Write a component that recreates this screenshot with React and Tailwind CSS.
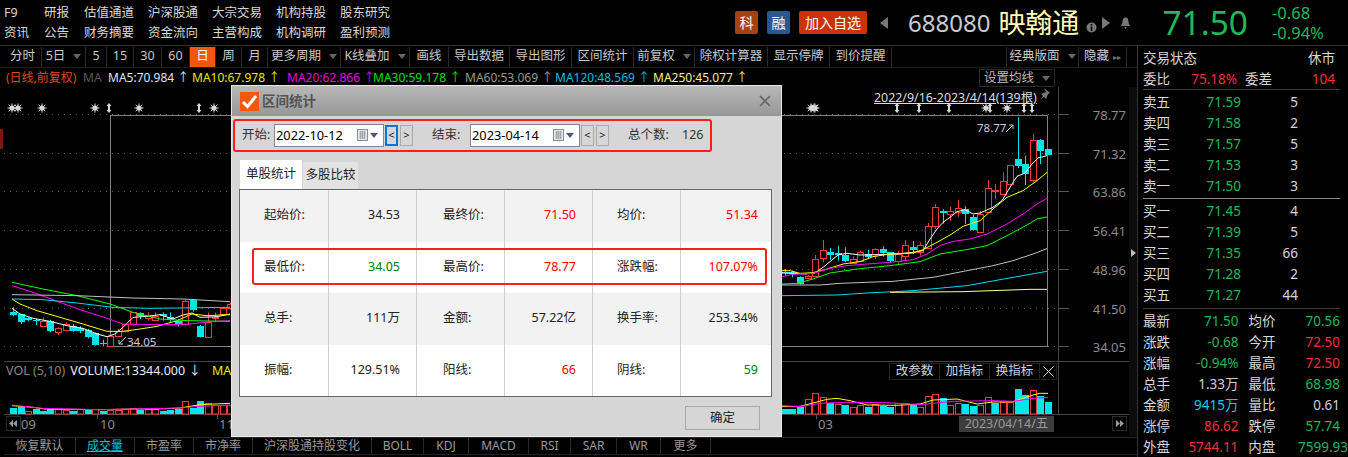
import React from "react";

const C = "#00e5e5", R = "#f03c3c";
// [zx, bodyTop, bodyBot, wickTop, wickBot, up]
const rightC = [[15,548,552,540,560,0],[37,550,556,545,565,0],[61,565,585,562,587,0],[83,562,567,558,570,1],[106,511,560,498,560,1],[128,484,508,453,520,1],[151,490,497,477,513,0],[173,492,498,470,515,0],[196,497,516,475,520,0],[218,511,522,502,525,1],[241,490,516,485,518,1],[263,496,503,482,510,0],[286,481,495,478,510,1],[308,481,492,472,503,0],[331,490,516,490,522,0],[353,495,516,485,525,1],[376,468,500,453,516,1],[398,474,483,456,495,0],[421,468,490,460,500,1],[443,411,478,402,480,1],[466,355,412,345,420,1],[488,366,371,360,404,0],[511,367,376,353,395,1],[533,358,370,333,383,1],[556,361,374,352,405,0],[578,384,423,378,425,0],[601,374,428,366,430,1],[623,298,368,273,370,1],[646,303,307,285,330,1],[668,277,316,250,320,1],[691,229,284,229,284,1],[713,210,232,85,237,0],[736,226,255,200,288,0],[758,154,272,135,282,1],[781,153,185,150,225,0],[803,180,197,180,197,0]];
const leftC = [[38,128,137,115,142,0],[62,135,160,135,165,0],[85,147,152,145,158,0],[107,152,157,150,168,0],[128,157,170,145,172,1],[151,155,185,152,190,0],[173,178,188,175,198,1],[197,165,184,160,186,1],[218,170,185,165,188,0],[241,178,187,172,192,0],[263,182,204,180,208,0],[286,193,227,190,230,0],[308,222,225,212,232,0],[331,200,230,198,232,1],[353,185,200,180,205,1],[376,165,187,165,190,1],[398,130,165,130,170,1],[421,132,140,130,150,0],[443,142,148,130,155,1],[466,140,152,130,155,1],[488,135,142,130,155,0],[511,145,153,130,160,0],[533,155,166,150,172,0],[556,97,165,90,170,1],[578,92,124,90,128,0],[601,172,203,168,205,0],[623,160,205,130,205,1],[646,143,148,130,160,1],[668,118,135,115,140,1],[691,105,118,100,122,1]];
const rightL = [
  ["#ffffff",[[5,552],[40,553],[75,555],[106,552],[130,535],[150,518],[175,498],[200,493],[240,498],[300,497],[350,495],[400,490],[430,485],[450,450],[470,420],[490,400],[510,385],[530,368],[555,362],[580,375],[600,372],[640,355],[665,335],[680,310],[695,285],[712,262],[735,252],[755,225],[775,207],[800,200]]],
  ["#ffff00",[[5,545],[30,545],[60,553],[100,551],[140,540],[190,525],[240,518],[280,503],[330,495],[400,492],[430,482],[470,460],[510,438],[550,412],[600,395],[640,360],[680,325],[730,305],[770,275],[800,250]]],
  ["#ff00ff",[[5,563],[40,556],[100,553],[150,538],[200,530],[260,525],[330,520],[400,512],[440,495],[480,470],[520,457],[570,450],[620,435],[680,405],[730,375],[770,345],[800,328]]],
  ["#00ff00",[[5,585],[50,583],[100,570],[150,552],[230,540],[330,530],[420,518],[480,495],[570,480],[620,470],[680,440],[740,408],[770,390],[800,384]]],
  ["#c0c0c0",[[5,588],[120,588],[180,583],[340,577],[460,565],[560,545],[640,530],[700,515],[760,495],[800,479]]],
  ["#00d8f0",[[5,620],[170,618],[260,612],[400,605],[560,590],[700,565],[800,547]]],
  ["#ffff90",[[330,610],[550,608],[750,601],[800,601]]],
];
const leftL = [
  ["#ffffff",[[36,118],[60,135],[100,148],[150,157],[200,170],[250,178],[290,195],[320,203],[345,195],[370,175],[400,145],[440,142],[480,137],[520,150],[550,138],[575,132],[600,145],[650,143],[690,135]]],
  ["#ffff00",[[36,90],[60,105],[110,125],[180,145],[250,165],[320,187],[370,187],[420,180],[470,172],[530,155],[575,135],[620,140],[660,138],[690,137]]],
  ["#ff00ff",[[36,50],[100,70],[180,100],[250,125],[320,148],[370,165],[420,166],[500,167],[570,165],[640,157],[690,155]]],
  ["#00ff00",[[36,40],[130,60],[230,80],[330,105],[400,130],[480,150],[560,155],[690,157]]],
  ["#c0c0c0",[[36,77],[230,80],[400,87],[550,90],[690,98]]],
  ["#00d8f0",[[36,90],[130,92],[230,102],[340,115],[450,118],[690,115]]],
];
const rightV = [[15,330,0],[37,330,0],[61,323,0],[83,300,1],[106,282,1],[128,295,1],[151,313,0],[173,316,1],[196,318,0],[218,325,1],[241,318,1],[263,323,0],[286,316,1],[308,320,0],[331,323,0],[353,313,1],[376,313,1],[398,317,0],[421,324,1],[443,292,1],[466,286,1],[488,297,0],[511,319,1],[533,313,1],[556,316,0],[578,321,0],[601,318,1],[623,295,1],[646,312,0],[668,308,1],[691,308,1],[713,270,0],[736,288,0],[758,274,1],[781,291,0],[803,309,0]];
const leftV = [[38,417,0],[62,415,0],[85,427,1],[107,420,0],[128,425,0],[151,417,0],[173,421,1],[197,423,1],[218,425,0],[241,421,1],[263,423,0],[286,421,1],[308,425,0],[331,423,1],[353,423,1],[376,421,1],[398,417,1],[421,423,0],[443,420,1],[466,421,1],[488,426,0],[511,423,0],[533,420,0],[556,397,1],[578,417,0],[601,397,0],[623,401,1],[646,408,1],[668,408,1],[691,408,1]];
const rightVL = [["#ffff00",[[5,323],[60,322],[100,312],[140,301],[170,298],[210,305],[260,318],[350,319],[420,315],[460,303],[530,300],[590,315],[640,309],[700,308],[760,288],[780,283],[803,283]]],["#ff00ff",[[5,320],[60,323],[120,313],[200,310],[320,311],[420,317],[520,307],[640,305],[700,307],[760,298],[803,295]]]];
const leftVL = [["#ffff00",[[36,410],[100,415],[135,420],[300,422],[400,420],[470,420],[540,417],[600,407],[690,403]]],["#ff00ff",[[36,408],[130,418],[300,422],[540,417],[600,412],[690,408]]]];

const rightX = z => Math.round(780 + z / 3);
const leftX = z => Math.round(z / 3);

function Candle({ c, toX, oy }) {
  const [zx, t, b, wt, wb, up] = c;
  const x = toX(zx);
  const col = up ? R : C;
  const top = Math.round(oy + t / 3), bot = Math.round(oy + b / 3);
  const h = Math.max(1, bot - top);
  return (
    <g>
      <line x1={x + 0.5} x2={x + 0.5} y1={oy + wt / 3} y2={oy + wb / 3} stroke={col} />
      {up ? <rect x={x - 2.5} y={top + 0.5} width={6} height={h} fill="#000" stroke={col} /> : <rect x={x - 3} y={top} width={7} height={h} fill={col} />}
    </g>
  );
}
function Lines({ data, toX, oy }) {
  return data.map(([col, pts], i) => (
    <polyline key={i} points={pts.map(([x, y]) => `${toX(x)},${oy + y / 3}`).join(" ")} fill="none" stroke={col} strokeWidth="1" />
  ));
}
function Vols({ data, toX, oy, base }) {
  return data.map(([zx, t, up], i) => {
    const x = toX(zx), top = Math.round(oy + t / 3), bot = Math.round(oy + base / 3);
    return up
      ? <rect key={i} x={x - 2.5} y={top + 0.5} width={6} height={bot - top - 0.5} fill="none" stroke={R} />
      : <rect key={i} x={x - 3} y={top} width={7} height={bot - top} fill={C} />;
  });
}
const Star = ({ x, y = 109 }) => (
  <g stroke="#d8d8d8" strokeWidth="1">
    <circle cx={x} cy={y} r="2.6" fill="#d8d8d8" stroke="none" />
    <line x1={x - 4.5} x2={x + 4.5} y1={y} y2={y} />
    <line x1={x} x2={x} y1={y - 4.5} y2={y + 4.5} />
    <line x1={x - 3.3} x2={x + 3.3} y1={y - 3.3} y2={y + 3.3} />
    <line x1={x - 3.3} x2={x + 3.3} y1={y + 3.3} y2={y - 3.3} />
  </g>
);
const UpDown = ({ x, y = 109 }) => (
  <path d={`M${x} ${y - 5} L${x + 2.5} ${y - 2} L${x + 1} ${y - 2} L${x + 1} ${y + 2} L${x + 2.5} ${y + 2} L${x} ${y + 5} L${x - 2.5} ${y + 2} L${x - 1} ${y + 2} L${x - 1} ${y - 2} L${x - 2.5} ${y - 2} Z`} fill="#d8d8d8" />
);

const axis = [["78.77",115],["71.32",154],["63.86",192],["56.41",231],["48.96",270],["41.50",309],["34.05",347]];

function Chart() {
  return (
    <svg className="absolute left-0 top-0 w-[1137px] h-[349px]" viewBox="0 88 1137 349">
      <rect x="0" y="130" width="3" height="20" fill="#7a1a08" />
      {axis.map(([t, y]) => (
        <g key={t}>
          <line x1="4" x2="1058" y1={y + 0.5} y2={y + 0.5} stroke="#555" strokeDasharray="1 5" />
          <line x1="1058" x2="1069" y1={y + 0.5} y2={y + 0.5} stroke="#555" />
          <text x="1126" y={y + 5.5} textAnchor="end" fontSize="13" fill="#8c8c8c">{t}</text>
        </g>
      ))}
      <rect x="110.5" y="116.5" width="937" height="231" fill="none" stroke="#808080" />
      <rect x="1129" y="88" width="8" height="349" fill="#0c0c0c" />
      <path d="M1131 250 L1136 254 L1131 258 Z" fill="#bbb" />
      <line x1="1058.5" x2="1058.5" y1="88" y2="415" stroke="#444" />
      <line x1="4" x2="1129" y1="362.5" y2="362.5" stroke="#444" />
      <line x1="4" x2="1129" y1="415.5" y2="415.5" stroke="#444" />
      {[12, 18, 42, 95, 139, 214, 811, 815, 1007].map(x => <Star key={x} x={x} />)}
      {[109, 199, 897, 919, 949, 990, 1024, 1032].map(x => <UpDown key={x} x={x} />)}
      <Star x={986} /><Star x={814} />
      {leftC.map((c, i) => <Candle key={i} c={c} toX={leftX} oy={270} />)}
      {rightC.map((c, i) => <Candle key={i} c={c} toX={rightX} oy={90} />)}
      <Lines data={leftL} toX={leftX} oy={270} />
      <Lines data={rightL} toX={rightX} oy={90} />
      <Vols data={leftV} toX={leftX} oy={270} base={435} />
      <Vols data={rightV} toX={rightX} oy={300} base={345} />
      <Lines data={leftVL} toX={leftX} oy={270} />
      <Lines data={rightVL} toX={rightX} oy={300} />
      <text x="977" y="133" fontSize="11.5" fill="#ccd">78.77</text>
      <path d="M1006 133 L1013 126 M1009 126 L1013 126 L1013 130" fill="none" stroke="#ccc" />
      <path d="M119 345 L126 338 M119 341 L119 345 L123 345" fill="none" stroke="#ccc" />
      <text x="127" y="347" fontSize="11.5" fill="#ccd">34.05</text>
      <g fill="#8c8c8c" fontSize="13">
        <line x1="97.5" x2="97.5" y1="415" y2="420" stroke="#555" />
        <text x="100" y="430">10</text>
        <line x1="217.5" x2="217.5" y1="415" y2="420" stroke="#555" />
        <text x="219" y="430">11</text>
        <text x="21" y="430">09</text>
        <line x1="816.5" x2="816.5" y1="415" y2="420" stroke="#555" />
        <text x="818" y="430">03</text>
      </g>
      <rect x="6.5" y="417.5" width="14" height="14" fill="#000" stroke="#2a2a2a" />
      <path d="M13 421 L9 424.5 L13 428 Z M17 421 L13 424.5 L17 428 Z" fill="#999" />
      <rect x="1112.5" y="417.5" width="14" height="14" fill="#000" stroke="#2a2a2a" />
      <path d="M1116 421 L1120 424.5 L1116 428 Z M1120 421 L1124 424.5 L1120 428 Z" fill="#999" />
      <path d="M1044 89 l6 5 -2 1 -2 5 -2 -2 -4 3 3 -4 -2 -2 5 -2 z" fill="#777" />
    </svg>
  );
}

const tools = [["分时",38],["5日",44,1],["5",21],["15",27],["30",28],["60",28],["日",26,0,1],["周",26],["月",26],["更多周期",73,1],["K线叠加",69,1],["画线",39],["导出数据",61],["导出图形",62],["区间统计",62],["前复权",61,1],["除权计算器",73],["显示停牌",62],["到价提醒",62]];
const Caret = () => <span className="ml-2 w-0 h-0 border-x-[4px] border-x-transparent border-t-[5px] border-t-[#666]" />;
const Tool = ({ t, w, caret, active }) => (
  <div style={{ width: w }} className={`h-[20px] flex items-center justify-center border-r border-[#2a2a2a] text-[12.5px] ${active ? "bg-[#f1570e] text-white" : "text-[#c8c8c8]"}`}>
    {t}{caret ? <Caret /> : null}
  </div>
);

const ma = [
  ["(日线,前复权)","text-[#dc4c1a] w-[77px]"],["MA","text-[#5a5a5a] w-[25px]"],["MA5:70.984 ↑","text-[#dde6f0] w-[84px]"],["MA10:67.978 ↑","text-[#e8e800] w-[95px]"],["MA20:62.866 ↑","text-[#e000e0] w-[86px]"],["MA30:59.178 ↑","text-[#00e000] w-[92px]"],["MA60:53.069 ↑","text-[#9a9a88] w-[90px]"],["MA120:48.569 ↑","text-[#00bfe0] w-[98px]"],["MA250:45.077 ↑","text-[#f2f28c]"],
];

const bottom = [["恢复默认",72,"text-[#9a9a9a]"],["成交量",59,"text-[#00c0d8] underline"],["市盈率",59,"text-[#9a9a9a]"],["市净率",59,"text-[#9a9a9a]"],["沪深股通持股变化",119,"text-[#9a9a9a]"],["BOLL",52,"text-[#9a9a9a]"],["KDJ",45,"text-[#9a9a9a]"],["MACD",60,"text-[#9a9a9a]"],["RSI",42,"text-[#9a9a9a]"],["SAR",46,"text-[#9a9a9a]"],["WR",44,"text-[#9a9a9a]"],["更多",50,"text-[#9a9a9a]"]];

const G = "text-[#1fb85a]", Rd = "text-[#ee2f3a]", W = "text-[#c8d2dc]";
const orders = [[["卖五","71.59","5"],["卖四","71.58","2"],["卖三","71.57","5"],["卖二","71.53","3"],["卖一","71.50","3"]],[["买一","71.45","4"],["买二","71.39","5"],["买三","71.35","66"],["买四","71.28","2"],["买五","71.27","44"]]];
const stats = [["最新","71.50",G,"均价","70.56",G],["涨跌","-0.68",G,"今开","72.50",Rd],["涨幅","-0.94%",G,"最高","72.50",Rd],["总手","1.33万",W,"最低","68.98",G],["金额","9415万","text-[#00d0e8]","量比","0.61",W],["涨停","86.62",Rd,"跌停","57.74",G],["外盘","5744.11",Rd,"内盘","7599.93",G]];

function Side() {
  return (
    <div className="w-[210px] h-[411px] shrink-0 border-l border-[#333] text-[13.5px] leading-[17px] text-[#d8d8d8] pl-[5px] overflow-hidden">
      <div className="h-[22px] mt-[1px] flex justify-between items-center pr-[12px]"><span>交易状态</span><span>休市</span></div>
      <div className="h-[20px] flex items-center pr-[12px]">
        <span className="w-[47px]">委比</span><span className={`${Rd} w-[47px] text-right mr-[8px]`}>75.18%</span><span>委差</span><span className={`${Rd} ml-auto`}>104</span>
      </div>
      <div className="border-t border-[#3c3c3c] mr-[7px]" />
      {orders.map((grp, gi) => (
        <div key={gi} className={gi ? "border-t border-[#888] mr-[7px] pt-[2px] pb-[2px]" : "pt-[2px] pb-[1px]"}>
          {grp.map(([a, b, c]) => (
            <div key={a} className="h-[21px] flex items-center">
              <span className="w-[60px]">{a}</span><span className={`${G} w-[38px] text-right`}>{b}</span><span className="w-[57px] text-right text-[#d0d8e0]">{c}</span>
            </div>
          ))}
        </div>
      ))}
      <div className="border-t border-[#3c3c3c] mr-[7px] pt-[2px]">
        {stats.map(([a, b, bc, c, d, dc]) => (
          <div key={a} className="h-[21px] flex items-center">
            <span className="w-[30px]">{a}</span><span className={`${bc} w-[66px] text-right`}>{b}</span><span className="w-[60px] pl-[10px]">{c}</span><span className={`${dc} w-[42px] text-right`}>{d}</span>
          </div>
        ))}
      </div>
    </div>
  );
}

const DateBox = ({ v }) => (
  <div className="w-[110px] h-[23px] bg-white border border-[#888] flex items-center pl-[1px] pr-[5px] text-[12.8px] text-black">
    <span>{v}</span>
    <svg className="ml-auto" width="12" height="13" viewBox="0 0 12 13">
      <rect x="0.5" y="0.5" width="10" height="11" fill="#e4e6ea" stroke="#8a8f98" />
      <path d="M2.5 3 H8.5 M2.5 5 H8.5 M2.5 7 H8.5 M2.5 9 H8.5 M3.5 2 V10 M5.5 2 V10 M7.5 2 V10" stroke="#a0a4ac" strokeWidth="1" />
    </svg>
    <span className="ml-[1px] w-0 h-0 border-x-[4px] border-x-transparent border-t-[5px] border-t-[#4a5a78]" />
  </div>
);
const Small = ({ t, active }) => (
  <div className={`w-[13px] h-[21px] flex items-center justify-center text-[11px] text-[#222] ${active ? "border-2 border-[#0078d7]" : "border border-[#aaa]"}`}>{t}</div>
);

const rows = [
  ["起始价:","34.53","text-[#222]","最终价:","71.50","text-[#f00]","均价:","51.34","text-[#f00]"],
  ["最低价:","34.05","text-[#008000]","最高价:","78.77","text-[#f00]","涨跌幅:","107.07%","text-[#f00]"],
  ["总手:","111万","text-[#222]","金额:","57.22亿","text-[#222]","换手率:","253.34%","text-[#222]"],
  ["振幅:","129.51%","text-[#222]","阳线:","66","text-[#f00]","阴线:","59","text-[#008000]"],
];

function Dialog() {
  return (
    <div className="absolute left-[231px] top-[85px] w-[551px] h-[352px] bg-[#d6d6d6] border border-[#e8e8e8] flex flex-col">
      <div className="h-[30px] shrink-0 bg-gradient-to-b from-[#b8b8b8] to-[#979797] flex items-center pl-[8px] pr-[10px]">
        <div className="w-[19px] h-[19px] bg-[#f2590d] flex items-center justify-center">
          <svg width="17" height="15" viewBox="0 0 17 15"><path d="M2 8 L6.5 12.5 L15 2" fill="none" stroke="#fff" strokeWidth="3" /></svg>
        </div>
        <span className="ml-[3px] text-[13.5px] font-bold text-[#555]">区间统计</span>
        <svg className="ml-auto" width="12" height="12" viewBox="0 0 12 12"><path d="M1 1 L11 11 M11 1 L1 11" stroke="#666" strokeWidth="1.6" /></svg>
      </div>
      <div className="ml-[1px] mt-[3px] w-[479px] h-[33px] border-[2.5px] border-[#ff2015] rounded-[3px] flex items-center pl-[7px] text-[12.5px] text-[#333]">
        <span className="w-[32px]">开始:</span>
        <DateBox v="2022-10-12" />
        <div className="ml-[1px] flex gap-[2px]"><Small t="<" active /><Small t=">" /></div>
        <span className="ml-[19px] w-[38px]">结束:</span>
        <DateBox v="2023-04-14" />
        <div className="ml-[1px] flex gap-[2px]"><Small t="<" /><Small t=">" /></div>
        <span className="ml-[19px] w-[54px]">总个数:</span>
        <span>126</span>
      </div>
      <div className="ml-[8px] mt-[8px] flex items-end h-[29px] text-[12.5px] text-[#222]">
        <div className="w-[62px] h-[29px] bg-white flex items-center justify-center">单股统计</div>
        <div className="ml-px w-[55px] h-[27px] bg-[#e2e2e2] flex items-center justify-center">多股比较</div>
      </div>
      <div className="mx-[7px] w-[533px] border border-[#666] flex flex-col text-[12.5px] text-[#222] relative">
        {rows.map((r, i) => (
          <div key={i} className={`h-[51.5px] grid grid-cols-[89px_88px_88px_88px_88px_1fr] items-stretch ${i % 2 ? "bg-white" : "bg-[#f2f2f2]"}`}>
            <div className="border-r border-[#cfcfcf] flex items-center pl-[24px]">{r[0]}</div>
            <div className={`border-r border-[#cfcfcf] flex items-center justify-end pr-[16px] ${r[2]}`}>{r[1]}</div>
            <div className="border-r border-[#cfcfcf] flex items-center pl-[26px]">{r[3]}</div>
            <div className={`border-r border-[#cfcfcf] flex items-center justify-end pr-[16px] ${r[5]}`}>{r[4]}</div>
            <div className="border-r border-[#cfcfcf] flex items-center pl-[24px]">{r[6]}</div>
            <div className={`flex items-center justify-end pr-[13px] ${r[8]}`}>{r[7]}</div>
          </div>
        ))}
        <div className="absolute left-[12px] top-[58px] w-[515px] h-[37px] border-[2.5px] border-[#ff2015] rounded-[3px]" />
      </div>
      <div className="ml-[453px] mt-[9px] w-[75px] h-[24px] border border-[#aaa] flex items-center justify-center text-[12.5px] text-[#222]">确定</div>
    </div>
  );
}

export default function App() {
  return (
    <div className="relative w-[1348px] h-[457px] bg-black overflow-hidden flex flex-col font-['Noto_Sans','Noto_Sans_CJK_SC',sans-serif]">
      <header className="h-[46px] shrink-0 flex items-center border-b border-[#2e2e2e]">
        <div className="w-[735px] pl-[4px] text-[12.5px] text-[#d8d8d8] flex flex-col gap-[2px]">
          {[["F9","研报","估值通道","沪深股通","大宗交易","机构持股","股东研究"],["资讯","公告","财务摘要","资金流向","主营构成","机构调研","盈利预测"]].map((row, i) => (
            <div key={i} className="h-[18px] grid grid-cols-[40px_40px_64px_64px_64px_64px_64px] items-center">
              {row.map(t => <span key={t}>{t}</span>)}
            </div>
          ))}
        </div>
        <div className="w-[23px] h-[23px] rounded-[2px] bg-[#a8410f] text-white text-[14px] flex items-center justify-center">科</div>
        <div className="ml-[9px] w-[23px] h-[23px] rounded-[2px] bg-[#2a5697] text-white text-[14px] flex items-center justify-center">融</div>
        <div className="ml-[9px] w-[68px] h-[23px] rounded-[2px] bg-[#c83408] text-white text-[14px] flex items-center justify-center">加入自选</div>
        <span className="ml-[13px] w-0 h-0 border-y-[6.5px] border-y-transparent border-r-[8px] border-r-[#777]" />
        <span className="ml-[20px] text-[24px] text-[#c8ccd0] leading-none">688080</span>
        <span className="ml-[8px] text-[27px] text-[#ffffb4] leading-none">映翰通</span>
        <svg className="ml-[7px] mt-[10px]" width="11" height="11" viewBox="0 0 11 11"><circle cx="5.5" cy="5.5" r="5" fill="#777" /><rect x="4.7" y="4.5" width="1.6" height="4.5" fill="#000" /><rect x="4.7" y="2" width="1.6" height="1.6" fill="#000" /></svg>
        <span className="ml-[5px] w-0 h-0 border-y-[6.5px] border-y-transparent border-l-[8px] border-l-[#777]" />
        <svg className="ml-[10px]" width="11" height="12" viewBox="0 0 11 12"><path d="M5.5 0.5 C8 0.5 8.5 3 8.5 5 C8.5 7 10 8 10.5 9 L0.5 9 C1 8 2.5 7 2.5 5 C2.5 3 3 0.5 5.5 0.5 Z M4 10 L7 10 L5.5 12 Z" fill="#777" /></svg>
        <span className="ml-[31px] text-[33.5px] text-[#1fb85a] leading-none">71.50</span>
        <div className="ml-[24px] text-[16.5px] leading-[20px] text-[#1fb85a]"><div>-0.68</div><div>-0.94%</div></div>
      </header>
      <div className="flex-1 flex min-h-0">
        <div className="w-[1137px] shrink-0 flex flex-col">
          <div className="h-[22px] shrink-0 flex items-center pl-[4px] border-b border-[#1c1c1c]">
            {tools.map(([t, w, c, a]) => <Tool key={t} t={t} w={w} caret={c} active={a} />)}
            <div className="ml-auto flex mr-[10px] border-l border-[#2a2a2a]">
              <Tool t="经典版面" w={72} caret />
              <div className="w-[48px] h-[20px] flex items-center justify-center border-r border-[#2a2a2a] text-[12.5px] text-[#c8d0e0]">隐藏<span className="ml-1 text-[8px] text-[#777]">▸▸</span></div>
            </div>
          </div>
          <div className="h-[19px] shrink-0 flex items-center pl-[6px] pt-[1px] text-[12px] whitespace-nowrap">
            {ma.map(([t, c]) => <span key={t} className={c}>{t}</span>)}
          </div>
          <div className="relative flex-1">
            <Chart />
            <div className="absolute left-[979px] top-[-18px] w-[76px] h-[18px] border border-[#2a2a2a] flex items-center justify-center text-[12.5px] text-[#bbb] bg-black">设置均线<Caret /></div>
            <div className="absolute left-[874px] top-[2px] text-[12.4px] text-[#ddd] underline whitespace-nowrap">2022/9/16-2023/4/14(139根)</div>
            <div className="absolute left-[6px] top-[275px] text-[12.5px] whitespace-nowrap flex gap-[5px]">
              <span className="text-[#888]">VOL (5,10)</span>
              <span className="text-[#e4ecf4]">VOLUME:13344.000 ↓</span>
              <span className="ml-[6px] text-[#e8e800]">MAV5</span>
            </div>
            <div className="absolute left-[889px] top-[276px] h-[17px] flex text-[12.5px] text-[#c8d4e0] bg-black border border-[#222]">
              {["改参数","加指标","换指标"].map(t => <div key={t} className="w-[50px] flex items-center justify-center border-r border-[#222]">{t}</div>)}
              <div className="w-[16px] flex items-center justify-center">
                <svg width="11" height="11" viewBox="0 0 11 11"><path d="M0.5 0.5 L10.5 10.5 M10.5 0.5 L0.5 10.5" stroke="#ddd" /></svg>
              </div>
            </div>
            <div className="absolute left-[959px] top-[329px] w-[95px] h-[16px] bg-[#3c3c3c] flex items-center justify-center text-[12.5px] text-[#999] whitespace-nowrap">2023/04/14/五</div>
          </div>
          <div className="h-[20px] shrink-0 pl-[4px] text-[12px] border-t border-[#2a2a2a]">
            <div className="h-[17px] flex items-center border-b border-[#222]">
              {bottom.map(([t, w, c]) => <div key={t} style={{ width: w }} className={`h-full flex items-center justify-center border-r border-[#2a2a2a] ${c}`}>{t}</div>)}
            </div>
          </div>
        </div>
        <Side />
      </div>
      <Dialog />
    </div>
  );
}
